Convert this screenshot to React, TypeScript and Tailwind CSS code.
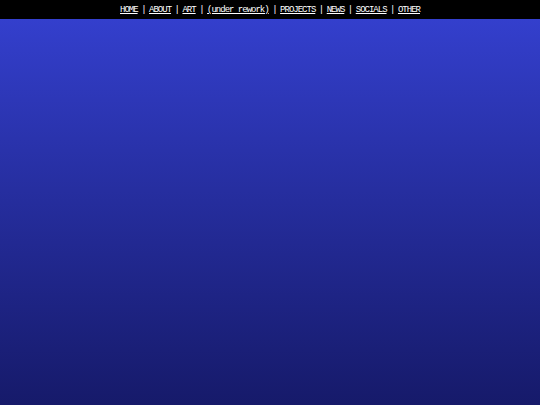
import React from 'react';

const links = ['HOME', 'ABOUT', 'ART', '(under rework)', 'PROJECTS', 'NEWS', 'SOCIALS', 'OTHER'];

export default function App() {
  return (
    <div className="min-h-screen flex flex-col bg-gradient-to-b from-[#3541d2] to-[#161a6a]">
      <nav className="h-[19px] pt-[2px] bg-black flex items-center justify-center text-[9px] tracking-[-1px] text-white font-['Liberation_Mono',monospace]">
        {links.map((l, i) => (
          <React.Fragment key={l}>
            {i > 0 ? <span className="px-[3.5px]">|</span> : null}
            <a href="#" className="underline">{l}</a>
          </React.Fragment>
        ))}
      </nav>
    </div>
  );
}
